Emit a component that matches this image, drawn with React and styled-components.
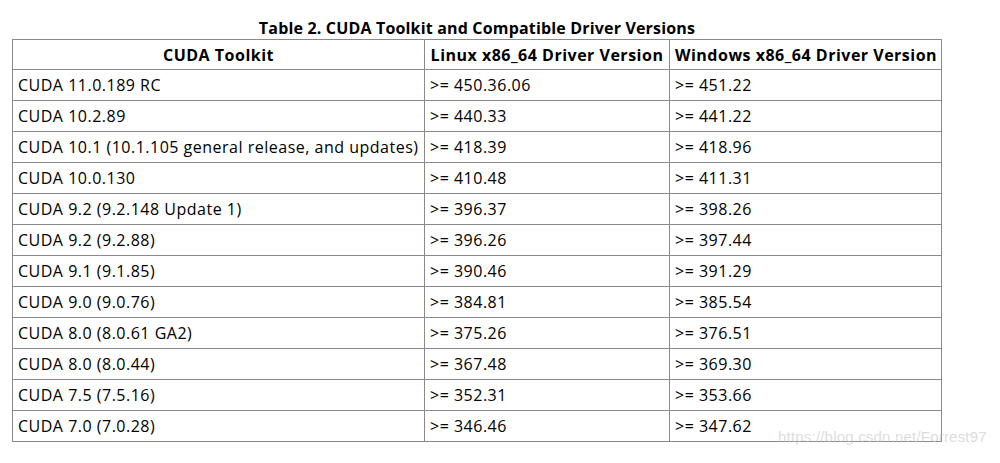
import styled, { createGlobalStyle } from "styled-components";

const rows = [
  ["CUDA 11.0.189 RC", ">= 450.36.06", ">= 451.22"],
  ["CUDA 10.2.89", ">= 440.33", ">= 441.22"],
  ["CUDA 10.1 (10.1.105 general release, and updates)", ">= 418.39", ">= 418.96"],
  ["CUDA 10.0.130", ">= 410.48", ">= 411.31"],
  ["CUDA 9.2 (9.2.148 Update 1)", ">= 396.37", ">= 398.26"],
  ["CUDA 9.2 (9.2.88)", ">= 396.26", ">= 397.44"],
  ["CUDA 9.1 (9.1.85)", ">= 390.46", ">= 391.29"],
  ["CUDA 9.0 (9.0.76)", ">= 384.81", ">= 385.54"],
  ["CUDA 8.0 (8.0.61 GA2)", ">= 375.26", ">= 376.51"],
  ["CUDA 8.0 (8.0.44)", ">= 367.48", ">= 369.30"],
  ["CUDA 7.5 (7.5.16)", ">= 352.31", ">= 353.66"],
  ["CUDA 7.0 (7.0.28)", ">= 346.46", ">= 347.62"],
];

const App = () => {
  return (
    <Page>
      <GlobalStyle />
      <Wrap>
        <Table>
          <Caption>Table 2. CUDA Toolkit and Compatible Driver Versions</Caption>
          <colgroup>
            <col style={{ width: 412 }} />
            <col style={{ width: 245 }} />
            <col style={{ width: 272 }} />
          </colgroup>
          <thead>
            <tr>
              <HeadCell>CUDA Toolkit</HeadCell>
              <HeadCell>Linux x86_64 Driver Version</HeadCell>
              <HeadCell>Windows x86_64 Driver Version</HeadCell>
            </tr>
          </thead>
          <tbody>
            {rows.map((r) => (
              <tr key={r[0]}>
                <Cell>{r[0]}</Cell>
                <Cell>{r[1]}</Cell>
                <Cell>{r[2]}</Cell>
              </tr>
            ))}
          </tbody>
        </Table>
        <Watermark>https://blog.csdn.net/Forrest97</Watermark>
      </Wrap>
    </Page>
  );
};

export default App;

const GlobalStyle = createGlobalStyle`
  html, body {
    margin: 0;
    background: #fff;
  }
`;

const Page = styled.div`
  width: 1000px;
  height: 463px;
  overflow: hidden;
  font-family: "Open Sans", "DejaVu Sans", sans-serif;
  color: #000;
`;

const Wrap = styled.div`
  position: relative;
  padding: 17px 0 0 12px;
`;

const Table = styled.table`
  border-collapse: collapse;
  table-layout: fixed;
  width: 930px;
  font-size: 16px;
  letter-spacing: 0.5px;
`;

const Caption = styled.caption`
  font-weight: 700;
  font-size: 16px;
  line-height: 22px;
  letter-spacing: 0.17px;
  text-align: center;
`;

const HeadCell = styled.th`
  border: 1px solid #8a8a8a;
  height: 30px;
  padding: 0 5px;
  font-weight: 700;
  text-align: center;
  white-space: nowrap;
  box-sizing: border-box;
`;

const Cell = styled.td`
  border: 1px solid #8a8a8a;
  height: 31px;
  padding: 0 5px;
  text-align: left;
  white-space: nowrap;
  box-sizing: border-box;
`;

const Watermark = styled.div`
  position: absolute;
  left: 778px;
  top: 428px;
  font-family: "Liberation Sans", Arial, sans-serif;
  font-size: 15px;
  letter-spacing: 0.2px;
  color: rgba(190, 190, 190, 0.55);
  pointer-events: none;
`;
